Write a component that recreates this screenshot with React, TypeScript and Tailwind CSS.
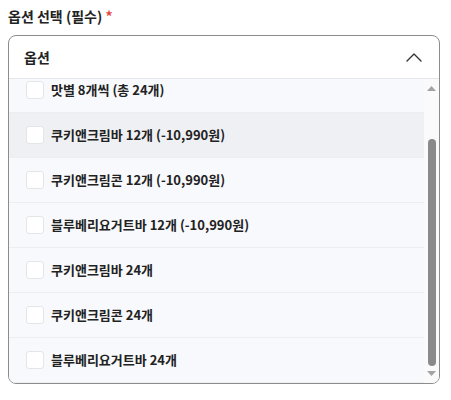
import React, { useEffect, useRef } from 'react';

const OPTIONS = [
    '맛별 8개씩 (총 24개)',
    '쿠키앤크림바 12개 (-10,990원)',
    '쿠키앤크림콘 12개 (-10,990원)',
    '블루베리요거트바 12개 (-10,990원)',
    '쿠키앤크림바 24개',
    '쿠키앤크림콘 24개',
    '블루베리요거트바 24개',
];

// Classic-style scrollbar drawn next to the list
const ScrollTrack: React.FC = () => (
    <div className="w-[15px] h-full bg-[#fafafa] flex flex-col items-center pt-[7px] pb-[7px]">
        <svg width="9" height="5" viewBox="0 0 9 5" className="shrink-0">
            <path d="M0 5 L4.5 0 L9 5 Z" fill="#a3a3a3" />
        </svg>
        <div className="h-[48px] shrink-0" />
        <div className="w-[8px] flex-1 rounded-full bg-[#8a8a8a]" />
        <svg width="9" height="5" viewBox="0 0 9 5" className="shrink-0 mt-[5px]">
            <path d="M0 0 L9 0 L4.5 5 Z" fill="#a3a3a3" />
        </svg>
    </div>
);

const App: React.FC = () => {
    const listRef = useRef<HTMLUListElement>(null);

    useEffect(() => {
        if (listRef.current) listRef.current.scrollTop = 11;
    }, []);

    return (
        <div className="w-[451px] h-[400px] bg-white px-2 pt-[6px] font-['Noto_Sans_CJK_KR','Noto_Sans',sans-serif] text-[#222]">
            <div className="text-[14px] font-semibold leading-5 mb-[9px]">
                옵션 선택 (필수) <span className="text-[#e5483f]">*</span>
            </div>

            <div className="w-[432px] border border-[#8c8c8c] rounded-lg overflow-hidden bg-white">
                {/* Header */}
                <div className="h-[43px] flex items-center justify-between pl-[15px] pr-[17px] border-b border-[#e4e6ea]">
                    <span className="text-[14px] font-bold">옵션</span>
                    <svg width="16" height="9" viewBox="0 0 16 9" fill="none">
                        <path d="M1 8 L8 1 L15 8" stroke="#333" strokeWidth="1.4" strokeLinecap="round" strokeLinejoin="round" />
                    </svg>
                </div>

                {/* Option list */}
                <div className="h-[304px] flex">
                    <ul ref={listRef} className="flex-1 h-full overflow-hidden bg-[#f8f9fc]">
                        {OPTIONS.map((label, i) => (
                            <li
                                key={label}
                                className={`h-[45px] flex items-center gap-[7px] pl-[17px] border-b border-[#eceef2] ${i === 1 ? 'bg-[#eef0f4]' : ''}`}
                            >
                                <span className="w-[18px] h-[18px] rounded-[3px] bg-white border border-[#e3e5e9]" />
                                <span className="text-[13px] font-semibold">{label}</span>
                            </li>
                        ))}
                    </ul>
                    <ScrollTrack />
                </div>
            </div>
        </div>
    );
};

export default App;
